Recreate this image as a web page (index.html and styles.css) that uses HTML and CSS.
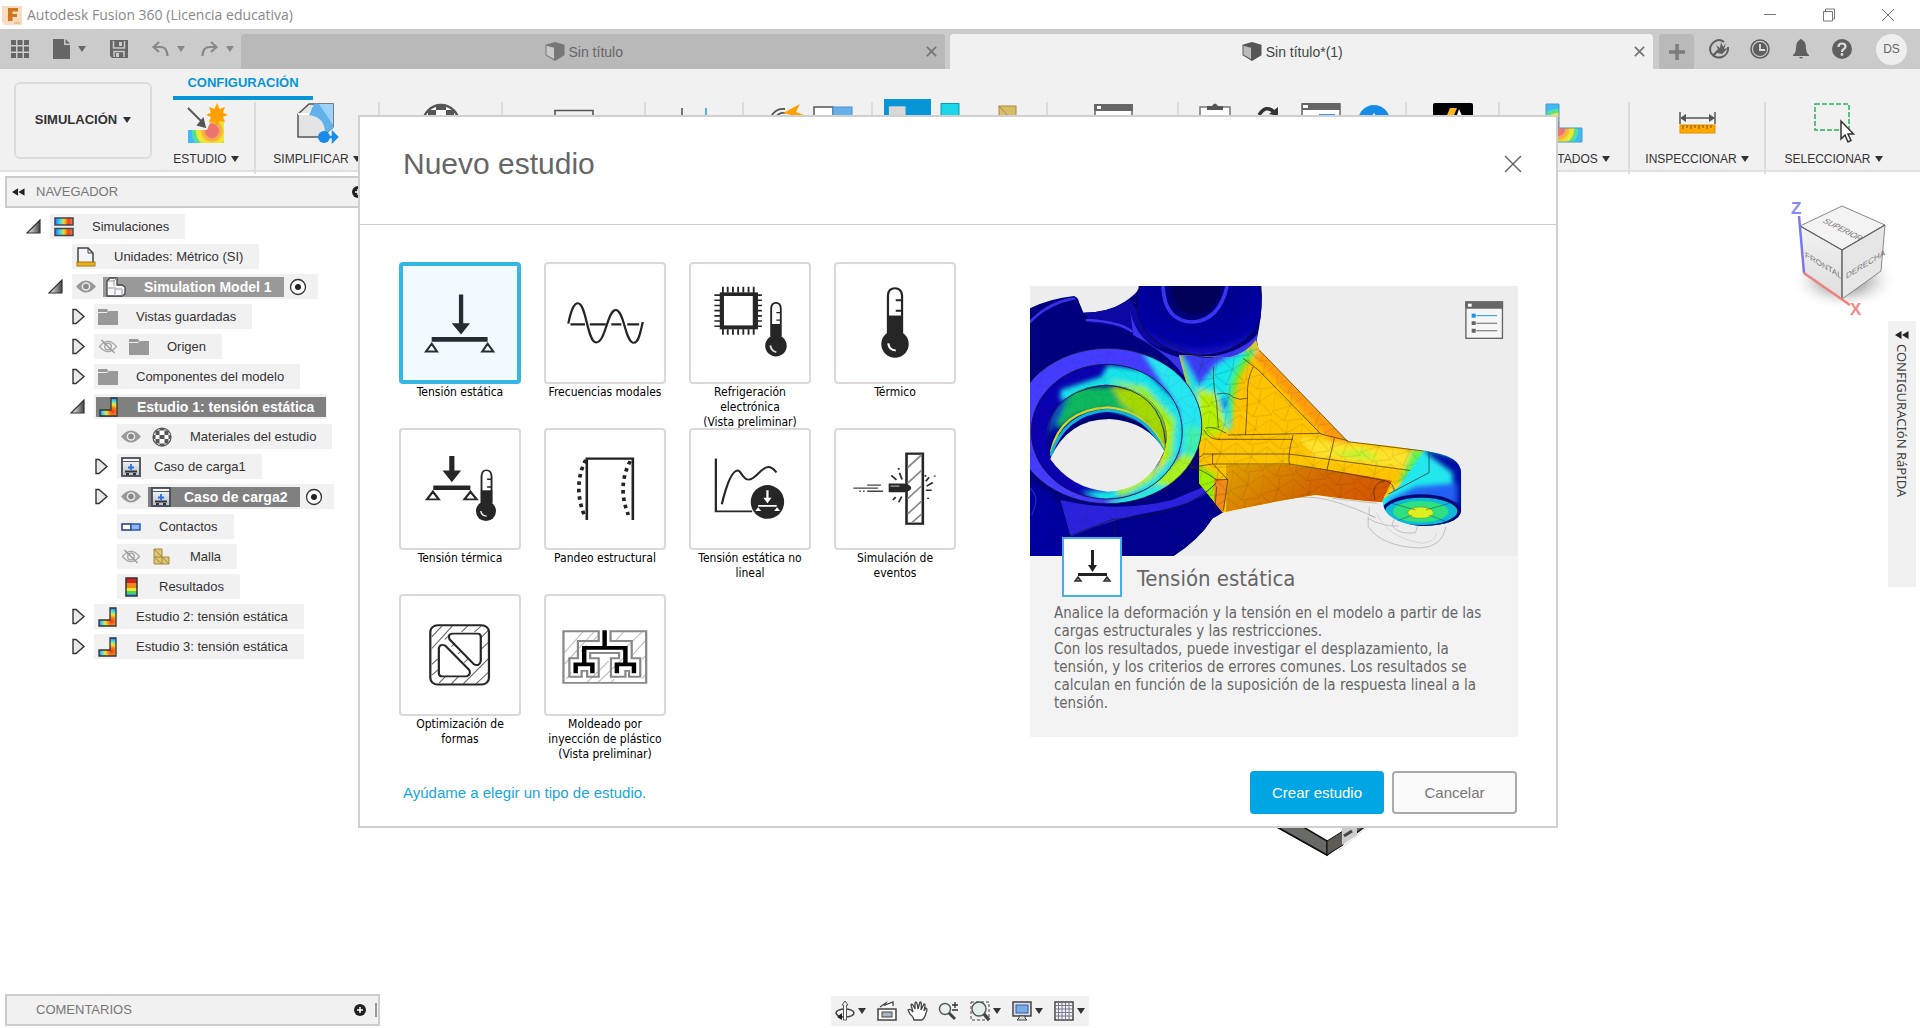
FILE: index.html
```html
<!DOCTYPE html>
<html lang="es">
<head>
<meta charset="utf-8">
<meta name="viewport" content="width=device-width, initial-scale=1">
<title>Autodesk Fusion 360 (Licencia educativa)</title>
<link rel="stylesheet" href="styles.css">
</head>
<body>
<svg class="defs" aria-hidden="true">
  <defs>
    <linearGradient id="heat" x1="0" x2="1"><stop offset="0" stop-color="#2a6fff"/><stop offset=".3" stop-color="#3fe0e0"/><stop offset=".5" stop-color="#f5d820"/><stop offset=".75" stop-color="#f53a20"/><stop offset="1" stop-color="#f58a20"/></linearGradient>
    <radialGradient id="heatspot" cx=".75" cy=".75" r=".78"><stop offset="0" stop-color="#f23318"/><stop offset=".3" stop-color="#f98a1c"/><stop offset=".5" stop-color="#f4e532"/><stop offset=".72" stop-color="#4fe0e0"/><stop offset="1" stop-color="#2a6fff"/></radialGradient>
    <radialGradient id="bands" gradientUnits="userSpaceOnUse" cx="14" cy="26" r="26"><stop offset=".25" stop-color="#ee7470"/><stop offset=".28" stop-color="#f8a058"/><stop offset=".42" stop-color="#f6c030"/><stop offset=".48" stop-color="#f2e532"/><stop offset=".6" stop-color="#e8e83a"/><stop offset=".64" stop-color="#5be07c"/><stop offset=".76" stop-color="#4be0b0"/><stop offset=".8" stop-color="#40b8fa"/></radialGradient>
    <radialGradient id="bands2" gradientUnits="userSpaceOnUse" cx="26" cy="28" r="26"><stop offset=".25" stop-color="#ee7470"/><stop offset=".28" stop-color="#f8a058"/><stop offset=".4" stop-color="#f6c030"/><stop offset=".46" stop-color="#f2e532"/><stop offset=".6" stop-color="#e8e83a"/><stop offset=".64" stop-color="#5be07c"/><stop offset=".76" stop-color="#4be0b0"/><stop offset=".8" stop-color="#40b8fa"/></radialGradient>
    <linearGradient id="tri" x1="0" x2="1"><stop offset="0" stop-color="#fff"/><stop offset="1" stop-color="#444"/></linearGradient>
    <linearGradient id="metal" x1="0" y1="0" x2="0" y2="1"><stop offset="0" stop-color="#fdfdff"/><stop offset="1" stop-color="#b4bccb"/></linearGradient>
  </defs>
  <symbol id="open" viewBox="0 0 15 15"><path d="M1 14L14 1V14Z" fill="url(#tri)" stroke="#333" stroke-width="1.2"/></symbol>
  <symbol id="closed" viewBox="0 0 15 17"><path d="M2 1.5H5L13 8.500L5 15.500H2Z" fill="#e9e9ec" stroke="#333" stroke-width="1.4"/></symbol>
  <symbol id="eye" viewBox="0 0 20 14"><path d="M0 7Q10-5 20 7Q10 19 0 7Z" fill="#999"/><circle cx="10" cy="7" r="4.300" fill="#e9e9e9"/><circle cx="10" cy="7" r="2.800" fill="#888"/></symbol>
  <symbol id="eyeoff" viewBox="0 0 20 16"><path d="M1 8Q10-3 19 8Q10 19 1 8Z" fill="none" stroke="#aaa" stroke-width="1.400"/><circle cx="10" cy="8" r="3.500" fill="none" stroke="#aaa" stroke-width="1.500"/><path d="M3 1L17 15" stroke="#999" stroke-width="1.400"/></symbol>
  <symbol id="folder" viewBox="0 0 20 18"><path d="M0 1H9L10.500 3H20V17H0Z" fill="#999"/><path d="M0 4.500H9L10.500 3" fill="none" stroke="#eee" stroke-width="1"/></symbol>
  <symbol id="study" viewBox="0 0 20 20"><path d="M12 1H18V19H1V13H12Z" fill="url(#heatspot)" stroke="#333" stroke-width="1.300"/></symbol>
  <symbol id="load" viewBox="0 0 20 20"><rect x="1" y="1" width="18" height="18" fill="url(#metal)" stroke="#444a52" stroke-width="1.800"/><path d="M2 4.500H18" stroke="#555" stroke-width="1"/><path d="M10 7V13M7 10.500H13" stroke="#2a6fe0" stroke-width="1.800"/><path d="M4 14.500H16M5 17H8M12 17H15" stroke="#333" stroke-width="1.800"/></symbol>
  <symbol id="radio" viewBox="0 0 18 18"><circle cx="9" cy="9" r="7.500" fill="#fff" stroke="#333" stroke-width="1.300"/><circle cx="9" cy="9" r="3" fill="#222"/></symbol>
  <symbol id="ball" viewBox="0 0 40 40"><clipPath id="ballclip"><circle cx="20" cy="20" r="18"/></clipPath><circle cx="20" cy="20" r="18" fill="#fff"/><g clip-path="url(#ballclip)" fill="#555"><path d="M15 0H25V7H15ZM7 7H15V16H7ZM25 7H33V16H25ZM15 16H25V24H15ZM0 16H7V24H0ZM33 16H40V24H33ZM7 24H15V33H7ZM25 24H33V33H25ZM15 33H25V40H15Z"/></g><circle cx="20" cy="20" r="18" fill="none" stroke="#555" stroke-width="2.500"/></symbol>
  <symbol id="box" viewBox="0 0 20 20"><path d="M0 3L10 0L20 3V14L10 20L0 14Z" fill="currentColor"/><path d="M1 4L9 6V18L1 13.500Z" fill="#fff" opacity=".6"/></symbol>
  <symbol id="rewind" viewBox="0 0 14 8"><path d="M0 4L6.500 0V8ZM7 4L13.500 0V8Z" fill="#222"/></symbol>
  <symbol id="cross" viewBox="0 0 18 18"><path d="M1 1L17 17M17 1L1 17" fill="none" stroke="currentColor" stroke-width="1.500"/></symbol>
  <symbol id="crossbold" viewBox="0 0 12 12"><path d="M1 1L11 11M11 1L1 11" fill="none" stroke="currentColor" stroke-width="2"/></symbol>
  <symbol id="plusdot" viewBox="0 0 12 12"><circle cx="6" cy="6" r="6" fill="#222"/><path d="M6 3V9M3 6H9" stroke="#fff" stroke-width="1.500"/></symbol>
</svg>

<header class="titlebar">
  <svg class="applogo" viewBox="0 0 20 20"><path d="M0 1H20V20H3L0 17Z" fill="#fbdcc0"/><path d="M6 3H16V6.500H10.500V9H15V12H10.500V16H6Z" fill="#d2761e"/><path d="M12 18H18" stroke="#f0a050"/></svg>
  <h1 class="apptitle">Autodesk Fusion 360 (Licencia educativa)</h1>
  <div class="winbtns">
    <button aria-label="Minimizar"><svg viewBox="0 0 14 14" width="14" height="14"><path d="M1 6.500H13" stroke="#777"/></svg></button>
    <button aria-label="Restaurar"><svg viewBox="0 0 14 14" width="14" height="14"><path d="M1.500 3.500H10.500V13H1.500ZM3.500 3V1H12.500V11H11" fill="none" stroke="#777"/></svg></button>
    <button aria-label="Cerrar"><svg viewBox="0 0 14 14" width="14" height="14"><path d="M1 1L13 13M13 1L1 13" stroke="#777"/></svg></button>
  </div>
</header>

<nav class="tabbar">
  <div class="quick">
    <button aria-label="Datos"><svg width="18" height="18" viewBox="0 0 18 18"><path d="M0 0H5V5H0ZM6.500 0H11.500V5H6.500ZM13 0H18V5H13ZM0 6.500H5V11.500H0ZM6.500 6.500H11.500V11.500H6.500ZM13 6.500H18V11.500H13ZM0 13H5V18H0ZM6.500 13H11.500V18H6.500ZM13 13H18V18H13Z" fill="#666"/></svg></button>
    <button aria-label="Archivo"><svg width="17" height="20" viewBox="0 0 17 20"><path d="M0 0H11V6H17V20H0ZM12.500 0L17 4.500H12.500Z" fill="#666"/></svg><i class="caret"></i></button>
    <button aria-label="Guardar"><svg width="18" height="18" viewBox="0 0 18 18"><path d="M0 0H18V18H2L0 16Z" fill="#666"/><path d="M3.500 1V8H14.500V1M4 17V11.500H14V17" fill="none" stroke="#cbcbcb" stroke-width="1.500"/><rect x="9" y="2" width="3" height="4" fill="#cbcbcb"/><rect x="6" y="13" width="3" height="4" fill="#cbcbcb"/></svg></button>
    <button class="dim" aria-label="Deshacer"><svg width="17" height="16" viewBox="0 0 17 16"><path d="M7 1L1.500 6L7 11M2 6H9Q15 6 15.500 15" fill="none" stroke="#888" stroke-width="2.200"/></svg><i class="caret"></i></button>
    <button class="dim" aria-label="Rehacer"><svg width="17" height="16" viewBox="0 0 17 16"><path d="M10 1L15.500 6L10 11M15 6H8Q2 6 1.500 15" fill="none" stroke="#888" stroke-width="2.200"/></svg><i class="caret"></i></button>
  </div>
  <div class="tab"><svg class="tabicon"><use href="#box"/></svg><span>Sin título</span><button class="tabclose" aria-label="Cerrar pestaña"><svg><use href="#crossbold"/></svg></button></div>
  <div class="tab current"><svg class="tabicon"><use href="#box"/></svg><span>Sin título*(1)</span><button class="tabclose" aria-label="Cerrar pestaña"><svg><use href="#crossbold"/></svg></button></div>
  <button class="newtab" aria-label="Nueva pestaña"><svg width="16" height="16" viewBox="0 0 16 16"><path d="M8 0V16M0 8H16" stroke="#7c7c7c" stroke-width="3.500"/></svg></button>
  <div class="account">
    <button aria-label="Extensiones"><svg width="20" height="20" viewBox="0 0 20 20"><path d="M15 3Q10-1 5 3Q-1 8 2 14Q6 20 13 18Q20 15 19 8" fill="none" stroke="#5f5f5f" stroke-width="2"/><path d="M3 16L9 10L7 6L11 9L12 3L14 8L17 4L15 10L19 9L13 15L8 14L5 18Z" fill="#5f5f5f"/></svg></button>
    <button aria-label="Estado"><svg width="20" height="20" viewBox="0 0 20 20"><circle cx="10" cy="10" r="9" fill="none" stroke="#5f5f5f" stroke-width="1.600"/><circle cx="10" cy="10" r="7" fill="#5f5f5f"/><path d="M10 5V11H15" fill="none" stroke="#ddd" stroke-width="1.800"/></svg></button>
    <button aria-label="Notificaciones"><svg width="20" height="20" viewBox="0 0 20 20"><path d="M8.500 1Q10-1 11.500 1Q15 3 15 9Q15 14 18 16V17H2V16Q5 14 5 9Q5 3 8.500 1ZM8 18H12Q10 21 8 18Z" fill="#5f5f5f"/></svg></button>
    <button aria-label="Ayuda"><svg width="20" height="20" viewBox="0 0 20 20"><circle cx="10" cy="10" r="10" fill="#5f5f5f"/><path d="M6.500 8Q6.500 4.500 10 4.500Q13.500 4.500 13.500 7.500Q13.500 9 11.500 10.200Q10 11 10 13" fill="none" stroke="#ddd" stroke-width="2.200"/><circle cx="10" cy="15.500" r="1.400" fill="#ddd"/></svg></button>
    <button class="avatar">DS</button>
  </div>
</nav>

<section class="ribbon">
  <button class="workspace">SIMULACIÓN<i class="caret"></i></button>
  <div class="ribbonmain">
    <a class="ribbontab" href="#configuracion">CONFIGURACIÓN</a>
    <div class="groups" id="configuracion">
      <button class="group"><span class="icons"><svg viewBox="0 0 40 40"><path d="M2 27H21L25 17H38V40H2Z" fill="url(#bands2)"/><path d="M2 5L18 21M19 24L12 22L17 16Z" stroke="#555" stroke-width="1.800" fill="#555"/><path d="M31 0L33.500 6L39 4L37 9.500L42 12L37 14L39 19L33.500 18L31 23L28.500 18L23 19L25 14L20 12L25 9.500L23 4L28.500 6Z" fill="#ffa000"/></svg></span><span class="name">ESTUDIO<i class="caret"></i></span></button>
      <button class="group"><span class="icons"><svg viewBox="0 0 40 40"><path d="M1 11L12 1H36V24L25 34H1Z" fill="#e4e4e4" stroke="#555" stroke-width="1.500"/><path d="M1 11H12L20 1" stroke="#fff" stroke-width="2" fill="none"/><path d="M17 1H36V26L28 30Q28 14 12 12Z" fill="#62b1ea"/><path d="M22 1H36V22Z" fill="#9bd2f7"/><circle cx="27" cy="34" r="6" fill="#1a8be6"/><path d="M27 34H38M36 30L40 34L36 38Z" stroke="#1a8be6" stroke-width="2.500" fill="#1a8be6"/></svg></span><span class="name">SIMPLIFICAR<i class="caret"></i></span></button>
      <button class="group" aria-label="Materiales"><span class="icons"><svg viewBox="0 0 40 40"><use href="#ball"/></svg></span></button>
      <button class="group" aria-label="Restricciones"><span class="icons"><svg viewBox="0 0 40 40"><path d="M1 7.500H39V26H1Z" fill="none" stroke="#555" stroke-width="1.600"/></svg></span></button>
      <button class="group" aria-label="Cargas"><span class="icons"><svg viewBox="0 0 40 40"><path d="M8 5V30" stroke="#555" stroke-width="1.600"/><path d="M32 5V30" stroke="#3a98ea" stroke-width="1.600"/></svg></span></button>
      <button class="group" aria-label="Contactos"><span class="icons shifted"><svg viewBox="0 0 40 40"><path d="M4 14Q8 5 18 6M9 14Q12 9 18 10" fill="none" stroke="#555" stroke-width="1.800"/><path d="M33 1L16 10L24 12L18 20L37 12L29 9Z" fill="#ffa000"/></svg><svg viewBox="0 0 40 40"><rect x="1" y="4" width="19" height="18" fill="#fff" stroke="#555" stroke-width="1.500"/><rect x="20" y="4" width="19" height="18" fill="#68b0e8" stroke="#4d94cc"/></svg></span></button>
      <button class="group" aria-label="Visualizar"><span class="icons wide shifted"><svg class="picked" viewBox="0 0 48 44"><rect x="5" y="7" width="17" height="22" fill="#d8d8d8"/></svg><svg viewBox="0 0 40 40"><rect y=".5" width="18" height="30" fill="#17d7e8" stroke="#069bb0"/></svg><svg viewBox="0 0 40 40"><rect y="3" width="17" height="26" fill="#d8bd68" stroke="#aa8840"/><path d="M0 3L17 22" stroke="#aa8840"/></svg></span></button>
      <button class="group" aria-label="Administrar"><span class="icons"><svg viewBox="0 0 40 40"><rect x="2" y="2" width="37" height="32" fill="#fff" stroke="#666" stroke-width="1.500"/><path d="M1 1H40V8H1Z" fill="#666"/><rect x="4" y="3" width="4" height="3" fill="#fff"/></svg></span></button>
      <button class="group" aria-label="Resolver"><span class="icons loose shifted"><svg viewBox="0 0 40 40"><path d="M5 4H35V34H5Z" fill="#fff" stroke="#777" stroke-width="1.500"/><path d="M12 7V3H17Q20-2 23 3H28V7Z" fill="#555"/><circle cx="20" cy="20" r="8" fill="#80b440"/></svg><svg viewBox="0 0 40 40"><path d="M11 12Q18 1 26 9" fill="none" stroke="#333" stroke-width="3.500"/><path d="M30 4V13L21 11Z" fill="#333"/></svg><svg viewBox="0 0 40 40"><rect x="1" y="1" width="38" height="32" fill="#fff" stroke="#666" stroke-width="1.500"/><path d="M1 0H39V7H1Z" fill="#666"/><rect x="2" y="2" width="5" height="3" fill="#fff"/><path d="M18 12H34" stroke="#3a98ea" stroke-width="2"/></svg><svg viewBox="0 0 40 40"><circle cx="20" cy="18" r="16" fill="#168ce8"/><path d="M18 13L20 10L22 13Z" fill="#fff"/></svg></span></button>
      <button class="group" aria-label="Ansys"><span class="icons"><svg viewBox="0 0 40 40"><rect width="40" height="40" rx="2"/><path d="M17 5H24L16 24H9Z" fill="#ffb71b"/><path d="M26 6L34 24H26L23 15Z" fill="#fff"/></svg></span></button>
      <button class="group"><span class="icons"><svg viewBox="0 0 40 40"><path d="M2 1H15V25H38V39H2Z" fill="url(#bands)" stroke="#4a9ac0"/></svg></span><span class="name">RESULTADOS<i class="caret"></i></span></button>
      <button class="group"><span class="icons"><svg viewBox="0 0 40 40"><path d="M3 9V21M38 9V21M4 15H37" stroke="#555" stroke-width="1.500"/><path d="M3 15L9 11V19ZM38 15L32 11V19Z" fill="#555"/><rect x="3" y="22" width="35" height="8" fill="#ffa800" stroke="#e09000"/><path d="M6 22V26M10 22V25M14 22V26M18 22V25M22 22V26M26 22V25M30 22V26M34 22V25" stroke="#7a5000"/></svg></span><span class="name">INSPECCIONAR<i class="caret"></i></span></button>
      <button class="group"><span class="icons"><svg viewBox="0 0 40 40"><rect x="1" y="1" width="34" height="26" fill="none" stroke="#27b25c" stroke-width="1.500" stroke-dasharray="5 2"/><path d="M27 18V36L31 32L34 39L37 37.500L34 31H39.500Z" fill="#fff" stroke="#333" stroke-width="1.500"/></svg></span><span class="name">SELECCIONAR<i class="caret"></i></span></button>
    </div>
  </div>
</section>

<main class="canvas">
  <aside class="browser">
    <div class="panelhead"><svg class="rew"><use href="#rewind"/></svg><h2>NAVEGADOR</h2><svg class="dot"><use href="#plusdot"/></svg></div>
    <ul class="tree">
      <li class="l0"><span class="tw"><svg class="o"><use href="#open"/></svg></span><div class="bar"><svg class="ic" viewBox="0 0 20 20"><rect x="1" y="1" width="18" height="7" fill="url(#heat)" stroke="#445" stroke-width="1.500"/><rect x="1" y="11.500" width="18" height="7" fill="url(#heat)" stroke="#445" stroke-width="1.500"/></svg><span class="tx">Simulaciones</span></div></li>
      <li class="l1"><span class="tw"></span><div class="bar"><svg class="ic" viewBox="0 0 20 20"><path d="M2 15V1H12L17 6V15" fill="#f2f5fa" stroke="#444" stroke-width="1.500"/><path d="M12 1V6H17" fill="none" stroke="#444"/><rect x="1" y="15" width="18" height="4" fill="#e8b020" stroke="#a87810"/></svg><span class="tx">Unidades: Métrico (SI)</span></div></li>
      <li class="l1"><span class="tw"><svg class="o"><use href="#open"/></svg></span><div class="bar"><svg class="eye"><use href="#eye"/></svg><div class="sel light"><svg class="ic" viewBox="0 0 20 20"><path d="M1 4L4 1H11V8H16L19 10V17L16 19H1Z" fill="#f6f7fa" stroke="#444" stroke-width="1.300"/><path d="M1 11H8M9 10V19M9 12H16V19M8 3V9M2 4H8L11 1" fill="none" stroke="#999"/></svg><b class="tx">Simulation Model 1</b></div><svg class="rad"><use href="#radio"/></svg></div></li>
      <li class="l2"><span class="tw"><svg class="c"><use href="#closed"/></svg></span><div class="bar"><svg class="ic"><use href="#folder"/></svg><span class="tx">Vistas guardadas</span></div></li>
      <li class="l2"><span class="tw"><svg class="c"><use href="#closed"/></svg></span><div class="bar"><svg class="eye"><use href="#eyeoff"/></svg><svg class="ic"><use href="#folder"/></svg><span class="tx">Origen</span></div></li>
      <li class="l2"><span class="tw"><svg class="c"><use href="#closed"/></svg></span><div class="bar"><svg class="ic"><use href="#folder"/></svg><span class="tx">Componentes del modelo</span></div></li>
      <li class="l2"><span class="tw"><svg class="o"><use href="#open"/></svg></span><div class="bar tight"><div class="sel"><svg class="ic"><use href="#study"/></svg><b class="tx">Estudio 1: tensión estática</b></div></div></li>
      <li class="l3"><span class="tw"></span><div class="bar"><svg class="eye"><use href="#eye"/></svg><svg class="ic"><use href="#ball"/></svg><span class="tx">Materiales del estudio</span></div></li>
      <li class="l3"><span class="tw"><svg class="c"><use href="#closed"/></svg></span><div class="bar"><svg class="ic"><use href="#load"/></svg><span class="tx near">Caso de carga1</span></div></li>
      <li class="l3"><span class="tw"><svg class="c"><use href="#closed"/></svg></span><div class="bar"><svg class="eye"><use href="#eye"/></svg><div class="sel"><svg class="ic"><use href="#load"/></svg><b class="tx near">Caso de carga2</b></div><svg class="rad"><use href="#radio"/></svg></div></li>
      <li class="l3"><span class="tw"></span><div class="bar"><svg class="ic" viewBox="0 0 20 20"><rect x="1" y="7" width="9" height="6" fill="#fff" stroke="#203a80" stroke-width="1.500"/><rect x="10" y="7" width="9" height="6" fill="#90b8f0" stroke="#2a58c0" stroke-width="1.500"/></svg><span class="tx">Contactos</span></div></li>
      <li class="l3"><span class="tw"></span><div class="bar"><svg class="eye"><use href="#eyeoff"/></svg><svg class="ic" viewBox="0 0 20 20"><path d="M2 2H10V10H17V17H2ZM2 10H10V17M2 2L10 10M2 10L10 17M10 10L17 17" fill="#dcc478" stroke="#a88838"/></svg><span class="tx">Malla</span></div></li>
      <li class="l3"><span class="tw"></span><div class="bar"><svg class="ic" viewBox="0 0 20 20"><path d="M5 1H16V6H5Z" fill="#d02020"/><path d="M5 6H16V11H5Z" fill="#f08a18"/><path d="M5 11H16V14H5Z" fill="#f4e630"/><path d="M5 14H16V17H5Z" fill="#40d860"/><path d="M5 17H16V19H5Z" fill="#3090f0"/><rect x="5" y="1" width="11" height="18" fill="none" stroke="#333" stroke-width="1.500"/></svg><span class="tx">Resultados</span></div></li>
      <li class="l2"><span class="tw"><svg class="c"><use href="#closed"/></svg></span><div class="bar"><svg class="ic"><use href="#study"/></svg><span class="tx">Estudio 2: tensión estática</span></div></li>
      <li class="l2"><span class="tw"><svg class="c"><use href="#closed"/></svg></span><div class="bar"><svg class="ic"><use href="#study"/></svg><span class="tx">Estudio 3: tensión estática</span></div></li>
    </ul>
  </aside>

  <svg class="viewcube" viewBox="0 0 130 130" role="img" aria-label="ViewCube">
    <defs><radialGradient id="shade"><stop offset=".4" stop-color="#999" stop-opacity=".7"/><stop offset="1" stop-color="#fff" stop-opacity="0"/></radialGradient><linearGradient id="face" x1="0" x2="0" y1="0" y2="1"><stop offset="0" stop-color="#f2f2f2"/><stop offset="1" stop-color="#dedede"/></linearGradient></defs>
    <ellipse cx="54" cy="89" rx="54" ry="30" fill="url(#shade)"/>
    <path d="M52 15L95 34L52 59L10 35Z" fill="#f3f3f3" stroke="#888" stroke-width="1"/>
    <path d="M10 35L52 59V108L14 83Z" fill="url(#face)" stroke="#888"/>
    <path d="M95 34L52 59V108L91 80Z" fill="#e6e6e6" stroke="#888"/>
    <path d="M52 59V108M52 59L10 35M52 59L95 34" stroke="#666" stroke-width="1.200"/>
    <text class="face" transform="translate(15 66) skewY(31)">FRONTAL</text>
    <text class="face" transform="translate(56 88) skewY(-32)">DERECHA</text>
    <text class="face" transform="translate(32 31) rotate(27) skewX(-25)">SUPERIOR</text>
    <path d="M9 25L14 82" stroke="#7b78ee" stroke-width="2.500"/><path d="M14 82L60 114" stroke="#f08080" stroke-width="2.500"/>
    <text class="axis" x="1" y="23" fill="#8a88f4">Z</text><text class="axis" x="60" y="124" fill="#f78888">X</text>
  </svg>

  <button class="quicksetup"><svg viewBox="0 0 14 8"><use href="#rewind"/></svg><span>CONFIGURACIóN RáPIDA</span></button>

  <svg class="model" viewBox="0 0 100 70" aria-hidden="true"><path d="M4 40L20 38L55 56L86 38H94L54 68Z" fill="#716c64" stroke="#111" stroke-width="1.500"/><path d="M4 40L54 68V54L22 35Z" fill="#686b65" stroke="#111" stroke-width="1.500"/><path d="M54 54V68L70 58V44Z" fill="#5d5b55" stroke="#111"/><path d="M69 40H84V48L69 58Z" fill="#ccc"/><path d="M71 49L79 44" stroke="#444" stroke-width="3"/><path d="M66 63L92 42" stroke="#ddd"/></svg>

  <footer class="bottom">
    <div class="panelhead comments"><h2>COMENTARIOS</h2><svg class="dot"><use href="#plusdot"/></svg><span class="grip"></span></div>
    <div class="viewbar">
      <button aria-label="Órbita"><svg viewBox="0 0 20 20"><ellipse cx="10" cy="12" rx="9" ry="4" fill="none" stroke="#444" stroke-width="1.500"/><path d="M10 0L13 4H11.500V19H8.500V4H7Z" fill="#fff" stroke="#555"/><path d="M7 12L2 16L7 19Z" fill="#222"/></svg><i class="caret"></i></button>
      <button aria-label="Mirar a"><svg viewBox="0 0 20 20"><path d="M1 8H19V19H1Z" fill="#fff" stroke="#444" stroke-width="1.500"/><rect x="5" y="11" width="10" height="5" fill="#aab4c4" stroke="#444"/><path d="M3 6L9 2L8 4L16 1V5" fill="#fff" stroke="#444" stroke-width="1.300"/></svg></button>
      <button aria-label="Encuadre"><svg viewBox="0 0 20 20"><path d="M6 19Q5 15 2 13L0 9Q2 7 5 11L3 4Q4 1 7 8L7 2Q9-1 10 8L12 1Q14 0 13 9L16 3Q18 2 16 10L18 7Q20 8 18 12Q17 17 14 19Z" fill="#fff" stroke="#444" stroke-width="1.300"/></svg></button>
      <button aria-label="Zoom"><svg viewBox="0 0 20 20"><circle cx="6" cy="8" r="5.500" fill="#e4f2f2" stroke="#555" stroke-width="1.400"/><path d="M10 12L16 18" stroke="#444" stroke-width="3"/><path d="M13 4H19M16 1V7M13 9H19" stroke="#333" stroke-width="1.300"/></svg></button>
      <button aria-label="Ajustar"><svg viewBox="0 0 20 20"><rect x="1" y="1" width="18" height="18" fill="none" stroke="#444" stroke-dasharray="3 2"/><circle cx="9" cy="8" r="7" fill="#e0efec" stroke="#555" stroke-width="1.400"/><path d="M14 13L19 19" stroke="#444" stroke-width="3.500"/></svg><i class="caret"></i></button>
      <button aria-label="Visualización"><svg viewBox="0 0 20 20"><rect x="1" y="1" width="18" height="14" fill="#dde" stroke="#444" stroke-width="1.500"/><rect x="4" y="4" width="12" height="8" fill="#7aabe4" stroke="#34609a"/><path d="M7 15H13V17L15 19H5L7 17Z" fill="#ddd" stroke="#444"/></svg><i class="caret"></i></button>
      <button aria-label="Rejilla"><svg viewBox="0 0 20 20"><rect x="1" y="1" width="18" height="18" fill="#f3f3f5" stroke="#444" stroke-width="1.500"/><path d="M4.500 1V19M8 1V19M11.500 1V19M15 1V19M1 4.500H19M1 8H19M1 11.500H19M1 15H19" stroke="#778"/></svg><i class="caret"></i></button>
    </div>
  </footer>
</main>

<div class="overlay">
<section class="dialog" role="dialog" aria-labelledby="dlgtitle">
  <header class="dlghead"><h2 id="dlgtitle">Nuevo estudio</h2><button class="dlgclose" aria-label="Cerrar"><svg><use href="#cross"/></svg></button></header>
  <div class="dlgbody">
    <div class="studies">
      <button class="study chosen" aria-pressed="true"><svg class="tile" viewBox="52 66 318 364" preserveAspectRatio="none"><path d="M208 157H220V249H239L214 285L188 249H208ZM132 293H288V308H132Z" fill="#262d30"/><path d="M132 314L147 339H116ZM288 314L304 339H273Z" fill="none" stroke="#262d30" stroke-width="6"/></svg><span>Tensión estática</span></button>
      <button class="study"><svg class="tile" viewBox="431 66 318 364" preserveAspectRatio="none"><g fill="none" stroke="#242424" stroke-width="6"><path d="M497 252H536M549 252H592M607 252H634M650 252H682" stroke-width="7"/><path d="M491 250C500 200 508 187 517 187C540 187 542 308 566 308C592 308 596 208 619 208C642 208 644 309 668 309C682 309 686 270 692 245"/></g></svg><span>Frecuencias modales</span></button>
      <button class="study"><svg class="tile" viewBox="810 66 318 364" preserveAspectRatio="none"><rect x="893" y="159" width="92" height="103" fill="none" stroke="#262626" stroke-width="11"/><path d="M896 136V284M909 136V154M909 267V284M923 136V154M923 267V284M937 136V154M937 267V284M951 136V154M951 267V284M965 136V154M965 267V284M979 136V284M873 162H1001M873 178H889M985 178H1001M873 194H889M985 194H1001M873 210H889M985 210H1001M873 226H889M985 226H1001M873 242H889M985 242H1001M873 258H1001" stroke="#262626" stroke-width="5"/><path d="M1026 290V205Q1026 186 1039 186Q1052 186 1052 205V290" fill="#fff" stroke="#262626" stroke-width="5"/><path d="M1026 251H1052V292H1026Z" fill="#262626"/><path d="M1040 216H1052M1040 239H1052" stroke="#262626" stroke-width="4"/><ellipse cx="1039" cy="318" rx="29" ry="33" fill="#262626"/><path d="M1024 317Q1025 334 1040 338" fill="none" stroke="#ddd" stroke-width="5"/></svg><span>Refrigeración electrónica<br>(Vista preliminar)</span></button>
      <button class="study"><svg class="tile" viewBox="1189 66 318 364" preserveAspectRatio="none"><path d="M1329 285V163Q1330 141 1348 141Q1365 141 1367 163V285" fill="#fff" stroke="#262626" stroke-width="6"/><path d="M1329 225H1367V290H1329Z" fill="#262626"/><path d="M1350 178H1366M1350 210H1366" stroke="#262626" stroke-width="6"/><ellipse cx="1348" cy="313" rx="37" ry="42" fill="#262626"/><path d="M1330 311Q1332 332 1350 333" fill="none" stroke="#fff" stroke-width="6"/></svg><span>Térmico</span></button>
      <button class="study"><svg class="tile" viewBox="52 26 318 364" preserveAspectRatio="none"><path d="M182 106H196V151H214L189 187L164 151H182ZM139 197H239V211H139Z" fill="#262626"/><path d="M138 216L154 240H122ZM239 216L256 240H223Z" fill="none" stroke="#262626" stroke-width="6"/><path d="M269 250V168Q270 150 282 150Q295 150 296 168V250" fill="#fff" stroke="#262626" stroke-width="5"/><path d="M267 212H298V255H267Z" fill="#262626"/><path d="M284 178H296M284 202H296" stroke="#262626" stroke-width="5"/><ellipse cx="281" cy="276" rx="27" ry="31" fill="#262626"/><path d="M267 276Q269 290 283 292" fill="none" stroke="#fff" stroke-width="4"/></svg><span>Tensión térmica</span></button>
      <button class="study"><svg class="tile" viewBox="431 26 318 364" preserveAspectRatio="none"><path d="M541 304V114H665V304" fill="none" stroke="#222" stroke-width="7"/><path d="M538 118Q502 200 536 294M658 122Q622 200 653 288" fill="none" stroke="#222" stroke-width="10" stroke-dasharray="11 12"/></svg><span>Pandeo estructural</span></button>
      <button class="study"><svg class="tile" viewBox="810 26 318 364" preserveAspectRatio="none"><path d="M877 114V277H975M893 255Q915 151 936 151C945 151 950 180 966 179C984 178 1000 140 1018 140C1030 140 1035 150 1040 157" fill="none" stroke="#262626" stroke-width="6"/><ellipse cx="1016" cy="248" rx="45" ry="52" fill="#262626"/><path d="M1013 212H1019V235H1027L1016 252L1005 235H1013ZM991 257H1041V263H991ZM983 276L991 264L999 276ZM1034 276L1042 264L1050 276Z" fill="#fff"/></svg><span>Tensión estática no lineal</span></button>
      <button class="study"><svg class="tile" viewBox="1189 26 318 364" preserveAspectRatio="none"><rect x="1379" y="99" width="44" height="216" fill="#fff" stroke="#262626" stroke-width="7"/><path d="M1382 142L1420 102M1382 190L1420 150M1382 238L1420 198M1382 285L1420 245M1393 312L1420 285" stroke="#888" stroke-width="5"/><path d="M1331 191H1373Q1390 194 1392 205Q1390 216 1373 218H1331Z" fill="#262626"/><path d="M1336 199H1360" stroke="#ccc" stroke-width="3"/><path d="M1236 205H1302M1273 196H1310M1273 215H1316M1252 215H1256M1262 215H1266" stroke="#444" stroke-width="4"/><path d="M1367 179L1360 158M1352 180L1338 166M1358 143V149M1366 231L1358 249M1350 233L1342 242M1431 184L1440 172M1433 199L1450 188M1431 212L1447 212M1430 165V170M1455 166V170M1437 235V239" stroke="#333" stroke-width="5"/></svg><span>Simulación de eventos</span></button>
      <button class="study"><svg class="tile" viewBox="52 44 318 364" preserveAspectRatio="none"><g fill="none" stroke="#666" stroke-width="3"><path d="M135 170L162 137M135 206L190 137M135 255L151 238M170 178L182 165M188 200L208 178M205 223L220 208M215 155L232 136M250 155L268 137M268 172L287 150M268 208L287 188M135 288L152 272M155 312L172 292M188 315L207 292M220 315L287 238M254 315L287 280M222 250L235 235"/></g><rect x="131" y="134" width="158" height="183" rx="20" fill="none" stroke="#262626" stroke-width="6"/><path d="M190 160H258Q267 160 267 170V245Q263 263 248 254L183 178Q177 162 190 160ZM154 205V282Q154 292 164 292H229Q243 285 235 271L171 197Q157 190 154 205Z" fill="#fff" stroke="#262626" stroke-width="6"/></svg><span>Optimización de formas</span></button>
      <button class="study"><svg class="tile" viewBox="431 44 318 364" preserveAspectRatio="none"><path d="M480 220L530 155M480 255L560 155M485 300L500 280M525 215L540 195M560 180L572 165M620 180L640 155M635 215L690 155M665 225L700 180M570 312L640 235M540 312L600 245M605 312L615 300M690 240L700 228M690 300L700 285" stroke="#bbb" stroke-width="3"/><path d="M573 153H478V312H701V153H605V183H662V236H685V293H655V275H645V293H606V236H628V220H550V236H573V293H542V275H527V293H494V236H517V183H573Z" fill="none" stroke="#888" stroke-width="6"/><path d="M589 150V204M534 252V204H645V252M511 282V255H556V282M622 282V255H668V282" fill="none" stroke="#000" stroke-width="12"/></svg><span>Moldeado por inyección de plástico<br>(Vista preliminar)</span></button>
    </div>

    <article class="preview">
      <svg class="render" viewBox="60 48 1443 810" preserveAspectRatio="none" role="img" aria-label="Tensión estática">
        <defs>
          <filter id="mix" x="-20%" y="-20%" width="140%" height="140%"><feGaussianBlur stdDeviation="8"/></filter>
          <clipPath id="ringc"><ellipse cx="290" cy="468" rx="278" ry="233"/></clipPath>
          <clipPath id="wallc"><ellipse cx="287" cy="485" rx="224" ry="202"/></clipPath>
          <clipPath id="borec"><ellipse cx="286" cy="500" rx="178" ry="155"/></clipPath>
          <clipPath id="armc"><path d="M738 240L1000 515Q1110 524 1225 543L1245 600L1105 697Q1000 690 905 675Q800 690 630 728L560 640L560 480L500 255L650 262Q700 250 728 210Z"/></clipPath>
          <clipPath id="footc"><path d="M1225 543Q1335 555 1335 610V722Q1330 765 1215 768Q1104 756 1102 690L1150 650Z"/></clipPath>
          <clipPath id="bodyc"><path id="bodyp" d="M60 115Q120 85 190 78Q203 82 205 97L218 128Q290 128 340 95Q385 65 381 48H744Q750 120 730 210L738 250L620 500L640 722L600 745Q560 810 485 858H60Z"/></clipPath>
          <linearGradient id="under" x1="0" x2="1" y1="0" y2=".3"><stop offset="0" stop-color="#dfa000"/><stop offset=".6" stop-color="#d26a00"/><stop offset="1" stop-color="#d45800"/></linearGradient>
          <radialGradient id="boss" cx=".5" cy=".3" r=".7"><stop offset=".3" stop-color="#00008c"/><stop offset=".85" stop-color="#0000a8"/><stop offset="1" stop-color="#1c14c8"/></radialGradient>
          <pattern id="mesh" width="92" height="84" patternUnits="userSpaceOnUse" patternTransform="rotate(8)"><path d="M0 0L50 36L92 0M50 36L38 84M50 36L92 70M0 60L50 36M0 60L38 84L92 70M0 0V60M50 0V36" fill="none" stroke="#000" stroke-width="1.300"/></pattern>
        </defs>
        <rect x="60" y="48" width="1443" height="810" fill="#ededed"/>
        <g fill="none" stroke="#aaa" stroke-width="2"><path d="M640 722Q820 675 905 683Q970 690 1080 742M955 685L1085 700M1060 740V770Q1100 830 1215 834Q1280 830 1290 770M1063 712V735L1082 743M1060 745Q1100 770 1150 768M1132 768Q1150 795 1200 788L1222 715M1130 768L1145 720"/><path d="M1085 730Q1120 805 1220 820Q1260 815 1262 790" stroke="#ccc"/></g>
        <use href="#bodyp" fill="#000080"/>
        <g clip-path="url(#bodyc)">
          <path d="M218 125Q300 125 355 90L375 120L480 240Q400 220 365 188Q300 160 240 158Z" fill="#0d08a4"/>
          <path d="M60 150Q120 90 190 82L196 88Q110 105 60 162Z" fill="#3732e8"/>
          <path d="M225 150Q330 155 362 186" fill="none" stroke="#3d39ef" stroke-width="7"/>
          <path d="M355 110Q370 240 530 268Q680 260 735 190L740 270L600 500L560 420Q530 280 365 195Z" fill="#3b34ee"/>
          <ellipse cx="562" cy="105" rx="186" ry="150" fill="url(#boss)" stroke="#0a0a55" stroke-width="3"/>
          <path d="M453 48Q458 156 542 156Q620 150 643 48" fill="#000078" stroke="#3a34f4" stroke-width="11"/>
          <path d="M480 48Q480 130 545 132Q610 130 628 48" fill="#000058"/>
          <path d="M150 690Q320 730 480 690L600 640L620 740L480 800H180Z" fill="#2a22dc"/>
          <path d="M180 800Q300 745 440 722Q560 700 620 640V745L485 858H180Z" fill="#00008e"/>
          <path d="M60 640Q170 660 180 858H60Z" fill="#0000a0"/>
          <path d="M60 655Q92 680 65 735" fill="none" stroke="#2722c0" stroke-width="4"/>
        </g>
        <g clip-path="url(#armc)">
          <path d="M500 200H1300V740H500Z" fill="#ffc400"/>
          <g filter="url(#mix)">
            <path d="M500 240H720L735 215L720 260Q650 310 655 400V480L560 460Z" fill="#18e8ee"/>
            <path d="M500 240H690Q610 280 600 300L560 350Z" fill="#3a3cf4"/>
            <path d="M555 355L610 370L645 480L560 510Z" fill="#b6f000"/>
            <path d="M625 390L640 380L644 410L630 420Z" fill="#0a60e8"/>
            <path d="M720 260Q655 320 660 460L650 400Q640 300 720 230Z" fill="#50f040"/>
            <path d="M540 580L610 610V735L540 740Z" fill="#9cf000"/>
            <path d="M850 500L1000 520L1225 548V605L900 560Z" fill="#ffe22a"/>
            <path d="M950 545L1050 540L1100 570L1020 565Z" fill="#b8f830"/>
            <path d="M1190 540H1260V640L1120 690L1150 640Z" fill="#5cf060"/>
            <path d="M740 240L1010 515H950L720 260Z" fill="#ff9a10"/>
          </g>
          <path d="M640 585H830Q960 600 1130 632L1100 698Q1000 690 905 675L640 725Z" fill="url(#under)"/>
          <path d="M605 625L645 630L632 725H605Z" fill="#f08a18"/>
          <path d="M1105 690Q1110 640 1235 608L1150 660Z" fill="#fbd020"/>
          <rect x="560" y="200" width="760" height="560" fill="url(#mesh)" opacity=".26"/>
        </g>
        <g fill="none" stroke="#3a2a00" stroke-width="2"><path d="M738 240L1000 515L1240 545"/><path d="M690 265L735 300L920 492L1000 512M720 290Q700 330 703 385Q700 460 697 495M612 372Q650 365 660 382Q680 392 703 385M603 290Q600 340 612 400L617 475M617 508H838M645 495L920 490M838 495Q820 560 828 586M960 505L938 600M570 552H825Q960 570 1230 608M535 592L600 582H828L940 600L1110 632M600 550V580L645 630L632 722M612 650L606 722M645 628L612 630Q560 592 535 592Q540 570 570 556M1080 690Q1065 640 1110 632Q1140 640 1137 672L1240 608V550M578 475Q600 465 640 490M575 480Q590 510 620 508"/></g>
        <g clip-path="url(#footc)"><path d="M1100 540H1340V770H1100Z" fill="#22e8ee"/><g filter="url(#mix)"><path d="M1225 535L1340 570V640L1300 600L1240 555Z" fill="#0010a0"/><path d="M1310 570H1350V790H1240L1310 690Z" fill="#0008a8"/><path d="M1200 650L1320 640V700L1110 695Z" fill="#2060f4"/></g><ellipse cx="1217" cy="724" rx="112" ry="46" fill="#10b8d8" stroke="#000878" stroke-width="10"/><ellipse cx="1215" cy="725" rx="82" ry="32" fill="#2de080"/><ellipse cx="1215" cy="728" rx="38" ry="17" fill="#dcf020" stroke="#506000"/><path d="M1130 700L1200 720M1230 720L1300 700M1140 755L1190 735M1240 735L1290 755" stroke="#104"/></g>
        <path d="M1240 545V608L1120 672" fill="none" stroke="#222" stroke-width="2"/>
        <ellipse cx="290" cy="468" rx="278" ry="233" fill="#443cff" clip-path="url(#bodyc)"/>
        <g clip-path="url(#ringc)"><g filter="url(#mix)">
          <path d="M390 245L480 270L590 420V560L500 660L440 640L500 560V420Z" fill="#25e6f2"/>
          <path d="M500 560L575 520V640L450 720L360 690Z" fill="#a8f220"/>
          <path d="M280 700L430 640L520 660L400 730Z" fill="#2ce8e0"/>
          <path d="M520 470H570V560H520Z" fill="#40f0b0"/>
        </g></g>
        <g clip-path="url(#wallc)"><rect x="60" y="270" width="460" height="430" fill="#0a00b0"/><g filter="url(#mix)">
          <path d="M150 360L270 320L290 285L400 300L520 420V560L430 660L280 700L210 665L300 660L440 580L450 480L340 370L220 400L150 390Z" fill="#18e4ea"/>
          <path d="M290 330L400 350L490 450L480 560L420 630L330 680L310 660L440 590L460 480L380 370Z" fill="#98f010"/>
          <path d="M420 400L470 480L450 590L380 640L320 665L440 590Z" fill="#f0e800"/>
        </g></g>
        <g clip-path="url(#borec)"><path d="M108 340H465V640H108Z" fill="#0000a0"/><g filter="url(#mix)"><path d="M145 350H400L460 420V580L400 460L290 415L200 435L140 480Z" fill="#10b860"/><path d="M300 345L400 360L465 470V560L410 470L330 400Z" fill="#a4d800"/><path d="M120 340L180 365L150 440L110 500Z" fill="#1048b8"/></g><path d="M122 545Q150 420 290 412Q400 420 455 530" fill="none" stroke="#d8d820" stroke-width="7"/><path d="M120 560Q160 430 290 421Q410 430 455 545" fill="none" stroke="#14b4d8" stroke-width="9"/><path d="M118 580Q160 437 290 432Q410 437 462 560L455 700H118Z" fill="#000074"/></g>
        <rect x="60" y="48" width="700" height="810" fill="url(#mesh)" opacity=".15" clip-path="url(#bodyc)"/>
        <path d="M120 567Q170 448 295 447Q410 455 457 543Q410 660 290 665Q180 655 120 567Z" fill="#ededed"/>
        <g fill="none" stroke="#16163c" stroke-width="2.500"><ellipse cx="290" cy="468" rx="278" ry="233"/><ellipse cx="287" cy="485" rx="223" ry="202"/><path d="M118 560Q80 370 285 345Q450 360 461 520M170 800L305 748Q520 735 610 640M308 748L312 805M440 190Q530 270 600 262"/></g>
        <rect x="1349" y="96" width="108" height="109" fill="#f6f6f6" stroke="#666" stroke-width="4"/><path d="M1347 94H1459V116H1347Z" fill="#666"/><rect x="1355" y="101" width="11" height="9" fill="#fff"/><path d="M1366 131H1378V143H1366Z" fill="#1b8fe6"/><path d="M1380 137H1441" stroke="#1b8fe6" stroke-width="3"/><path d="M1366 154H1378V165H1366ZM1366 176H1378V188H1366Z" fill="#666"/><path d="M1380 160H1441M1380 182H1441" stroke="#666" stroke-width="3"/>
      </svg>
      <div class="phead"><svg class="badge" viewBox="0 0 56 56" aria-hidden="true"><path d="M27 11H30V26H33L28.500 33L24 26H27ZM14 34H43V37H14Z" fill="#222"/><path d="M14 38L17 42H11ZM43 38L46 42H40Z" fill="#999" stroke="#333" stroke-width="1.500"/></svg><h3>Tensión estática</h3></div>
      <p>Analice la deformación y la tensión en el modelo a partir de las cargas estructurales y las restricciones.<br>Con los resultados, puede investigar el desplazamiento, la tensión, y los criterios de errores comunes. Los resultados se calculan en función de la suposición de la respuesta lineal a la tensión.</p>
    </article>
  </div>
  <footer class="dlgfoot"><a href="#ayuda">Ayúdame a elegir un tipo de estudio.</a><button class="primary">Crear estudio</button><button class="secondary">Cancelar</button></footer>
</section>
</div>
</body>
</html>
```
FILE: styles.css
```css
* { box-sizing: border-box; }
body {
  margin: 0;
  min-height: 100vh;
  display: flex;
  flex-direction: column;
  position: relative;
  overflow-x: hidden;
  background: #fff;
  color: #333;
  font: 13px/16px "Liberation Sans", Arial, sans-serif;
}
h1, h2, h3, p, ul { margin: 0; padding: 0; font-weight: normal; }
button { margin: 0; padding: 0; border: 0; background: none; color: inherit; font: inherit; }
svg { display: block; flex: none; overflow: visible; }
.defs { position: absolute; width: 0; height: 0; }
.caret { display: inline-block; flex: none; width: 0; height: 0; border: 4px solid transparent; border-top: 6px solid #333; border-bottom: 0; }

/* Window title */
.titlebar { display: flex; align-items: center; height: 29px; padding-left: 2px; }
.applogo { width: 20px; height: 20px; }
.apptitle { flex: 1; margin-left: 5px; font: 14px/28px "Open Sans", sans-serif; color: #888; }
.winbtns { display: flex; gap: 45px; padding-right: 25px; }

/* Document tabs */
.tabbar { display: flex; height: 40px; padding-top: 5px; background: #cbcbcb; }
.quick { display: flex; align-items: center; width: 241px; padding: 0 0 5px 11px; gap: 24px; }
.quick button { display: flex; align-items: center; gap: 8px; }
.quick .caret { border-top-color: #666; }
.quick .dim .caret { border-top-color: #888; }
.quick .dim { margin-right: -8px; }
.tab { position: relative; flex: 1; display: flex; align-items: center; justify-content: center; gap: 4px; margin-right: 5px; border-radius: 4px 4px 0 0; background: #b9b9b9; color: #666; font-size: 14px; padding-right: 18px; }
.tab.current { background: #f1f1f1; color: #444; margin-right: 6px; }
.tabicon { width: 20px; height: 19px; color: #777; }
.current .tabicon { color: #555; }
.tabclose { position: absolute; right: 8px; top: 12px; color: #777; }
.tabclose svg { width: 11px; height: 11px; }
.newtab { width: 35px; display: flex; align-items: center; justify-content: center; border-radius: 4px 4px 0 0; background: #b9b9b9; }
.account { display: flex; align-items: center; gap: 21px; padding: 0 13px 5px 15px; }
.avatar { width: 31px; height: 31px; margin-left: 3px; border-radius: 50%; background: #eee; color: #666; font-size: 12px; }

/* Ribbon */
.ribbon { display: flex; height: 103px; border-bottom: 2px solid #e0e0e0; background: #f1f1f1; }
.workspace { display: flex; align-items: center; justify-content: center; gap: 6px; width: 138px; height: 77px; margin: 13px 6px 0 14px; padding-bottom: 2px; border: 2px solid #ddd; border-radius: 6px; font-weight: bold; }
.ribbonmain { flex: 1; padding-right: 19px; min-width: 0; }
.ribbontab { display: block; width: 140px; height: 31px; margin-left: 15px; padding-top: 6px; border-bottom: 4px solid #0696d7; color: #0696d7; font-weight: bold; text-align: center; text-decoration: none; }
.groups { display: grid; grid-template-columns: 98fr 124fr 123fr 143fr 98fr 129fr 175fr 131fr 228fr 93fr 130fr 136fr 135fr; height: 66px; margin-top: 2px; }
.group { display: flex; flex-direction: column; align-items: center; min-width: 0; border-right: 2px solid #ddd; }
.group:last-child { border-right: 0; }
.icons { display: flex; justify-content: center; gap: 6px; height: 42px; padding-top: 1px; }
.icons svg { width: 40px; height: 40px; }
.icons.shifted { padding-left: 4px; }
.icons.wide { gap: 10px; }
.icons.wide svg + svg + svg { margin-left: 8px; }
.icons .picked { width: 47px; height: 44px; margin-top: -4px; background: #0696d7; }
.icons.loose { gap: 13px; }
.name { display: flex; align-items: center; gap: 4px; height: 30px; font-size: 12px; }

/* Canvas and browser tree */
.canvas { position: relative; flex: 1; display: flex; flex-direction: column; padding: 4px 5px 2px; }
.browser { width: 375px; flex: 1; }
.panelhead { display: flex; align-items: center; height: 32px; padding: 0 0 0 5px; border: 2px solid #ccc; background: #f1f1f1; color: #777; }
.panelhead h2 { flex: 1; font-size: 13px; line-height: 16px; }
.rew { width: 13px; height: 8px; margin-right: 11px; }
.dot { width: 12px; height: 12px; margin-right: 14px; }
.tree { list-style: none; padding-top: 6px; }
.tree li { display: flex; align-items: center; height: 30px; padding-bottom: 5px; }
.l0 { padding-left: 21px; }
.l1 { padding-left: 43px; }
.l2 { padding-left: 65px; }
.l3 { padding-left: 88px; }
.tw { width: 24px; flex: none; }
.tw .o { width: 15px; height: 15px; }
.tw .c { width: 15px; height: 17px; margin-left: 1px; }
.bar { display: flex; align-items: center; height: 25px; padding: 0 16px 0 4px; background: #f1f1f1; white-space: nowrap; }
.bar.tight { padding: 0 1px 0 2px; }
.ic { width: 20px; height: 20px; }
.eye { width: 20px; height: 15px; margin-right: 11px; }
.tx { margin-left: 18px; }
.tx.near { margin-left: 13px; }
b.tx { font-size: 14px; color: #fff; }
.sel { display: flex; align-items: center; height: 20px; padding: 0 12px 0 3px; background: #808080; }
.sel.light { background: #999; }
.eye + .sel { margin-left: -4px; }
.rad { width: 18px; height: 18px; margin: 0 -5px 0 5px; }

.viewcube { position: absolute; right: 0; top: 19px; width: 130px; height: 130px; }
.face { font: 8px "Liberation Sans", Arial, sans-serif; fill: #777; }
.axis { font: bold 17px "Liberation Sans", Arial, sans-serif; }
.quicksetup { position: absolute; right: 4px; top: 149px; width: 28px; height: 266px; padding: 10px 0; display: flex; flex-direction: column; align-items: center; gap: 5px; background: #f1f1f1; color: #444; }
.quicksetup svg { width: 14px; height: 8px; }
.quicksetup span { writing-mode: vertical-rl; font: 13px/14px "Noto Sans", sans-serif; white-space: nowrap; }
.model { position: absolute; left: 1273px; bottom: 171px; width: 100px; height: 70px; }

.bottom { display: flex; align-items: flex-end; }
.comments { width: 375px; padding-left: 29px; }
.comments .dot { margin-right: 9px; }
.grip { width: 3px; height: 14px; border-left: 2px solid #999; }
.viewbar { display: flex; align-items: center; gap: 11px; height: 30px; margin-left: 451px; padding: 0 4px; background: #f1f1f1; }
.viewbar button { display: flex; align-items: center; gap: 3px; }
.viewbar svg { width: 20px; height: 20px; }

/* New study dialog */
.overlay { position: absolute; inset: 0; display: flex; justify-content: center; align-items: flex-start; padding: 115px 4px 0 0; }
.dialog { width: 1200px; border: 2px solid #d0d0d0; background: #fff; }
.dlghead { display: flex; align-items: center; justify-content: space-between; height: 108px; padding: 0 34px 14px 43px; border-bottom: 1px solid #ccc; color: #666; }
.dlghead h2 { font-size: 30px; line-height: 34px; }
.dlgclose svg { width: 18px; height: 18px; }
.dlgbody { display: flex; justify-content: space-between; padding: 37px 38px 0 39px; }
.studies { display: grid; grid-template-columns: repeat(4, 122px); grid-auto-rows: 166px; column-gap: 23px; align-content: start; }
.study { display: flex; flex-direction: column; color: #000; font: 12px/15px "DejaVu Sans Condensed", "DejaVu Sans", sans-serif; }
.study span { align-self: stretch; padding: 0 1px; margin-top: 1px; }
.tile { width: 122px; height: 122px; border: 2px solid #dcd8d9; border-radius: 4px; }
.chosen .tile { border: 4px solid #35b6e3; background: #f1fbff; }
.preview { width: 488px; height: 451px; margin-top: 24px; background: #f3f3f3; color: #666; }
.render { width: 488px; height: 270px; overflow: hidden; }
.phead { display: flex; align-items: flex-end; gap: 15px; margin: -19px 0 0 32px; position: relative; }
.badge { width: 60px; height: 60px; border: 2px solid #3fb1e5; background: #fff; }
.phead h3 { font: 22px/36px "DejaVu Sans Condensed", "DejaVu Sans", sans-serif; }
.preview p { padding: 7px 24px 0; font: 15px/18px "DejaVu Sans Condensed", "DejaVu Sans", sans-serif; }
.dlgfoot { display: flex; align-items: center; gap: 8px; padding: 11px 39px 12px 43px; font-size: 15px; }
.dlgfoot a { margin-right: auto; color: #16a5e2; text-decoration: none; }
.primary { width: 134px; height: 43px; border-radius: 4px; background: #00a6e4; color: #fff; }
.secondary { width: 125px; height: 43px; border: 2px solid #aaa; border-radius: 4px; background: #fafafa; color: #777; }
```
